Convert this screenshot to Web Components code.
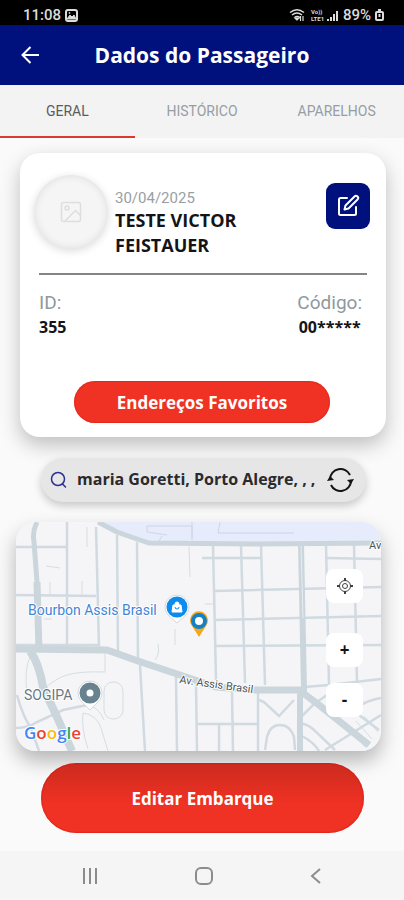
<!DOCTYPE html>
<html lang="pt-BR">
<head>
<meta charset="utf-8">
<meta name="viewport" content="width=device-width, initial-scale=1">
<title>Dados do Passageiro</title>
<style>
	body {
		margin: 0;
		background: #fafafa;
		font-family: "Open Sans", sans-serif;
		color: #141418;
	}
</style>
</head>
<body>
<passenger-page></passenger-page>

<script>
class BaseElement extends HTMLElement {
	constructor() {
		super();
		this.attachShadow({ mode: "open" });
		this.shadowRoot.innerHTML = `
			<style>
				* { box-sizing: border-box; }
				:host { display: block; box-sizing: border-box; }
				button { font: inherit; color: inherit; border: 0; padding: 0; background: none; cursor: pointer; }
				svg { display: block; }
			</style>
			${this.render()}
		`;
	}
}

class StatusBar extends BaseElement {
	render() {
		return `
			<style>
				:host {
					display: flex;
					justify-content: space-between;
					align-items: center;
					height: 25px;
					padding: 5px 20px 0 23px;
					background: #000;
					color: #dcdcdc;
					font: 500 15px/20px Roboto, sans-serif;
				}
				div { display: flex; align-items: center; gap: 4px; }
			</style>
			<div>
				<span>11:08</span>
				<svg width="13" height="13" viewBox="0 0 13 13" fill="none" stroke="#dcdcdc">
					<rect x="1" y="1" width="11" height="11" rx="2" stroke-width="2"/>
					<path d="M2 10l3-4 2 2 2-2 2 4z" fill="#dcdcdc"/>
					<circle cx="4.500" cy="4" r=".6"/>
				</svg>
			</div>
			<div>
				<svg width="50" height="15" viewBox="0 0 50 15" fill="none" stroke="#dcdcdc" stroke-width="1.500">
					<path d="M1 4.500Q8-1 15 4.500M3 7Q8 3 13 7M5.500 9.500Q8 7.500 11 9.500"/>
					<path d="M8 12l-2-2h4zM11.500 8v5M14 8v5" stroke-width="1.200" fill="#dcdcdc"/>
					<g fill="#dcdcdc" stroke="none" font-family="Roboto, sans-serif" font-size="6" font-weight="700">
						<text x="22" y="6">Vo))</text>
						<text x="22" y="13">LTE1</text>
					</g>
					<path d="M39 13v-2M42 13V9M45 13V6M48 13V3" stroke-width="2"/>
				</svg>
				<span>89%</span>
				<svg width="9" height="12" viewBox="0 0 9 12" fill="none" stroke="#dcdcdc" stroke-width="2">
					<rect x="1" y="3" width="7" height="8" rx="1"/><path d="M3 1h3M4.500 5v3"/>
				</svg>
			</div>
		`;
	}
}
customElements.define("status-bar", StatusBar);

class AppHeader extends BaseElement {
	render() {
		return `
			<style>
				:host {
					display: grid;
					grid-template-columns: 20px 1fr 20px;
					align-items: center;
					height: 60px;
					padding: 0 20px;
					background: #00107c;
					color: #fff;
				}
				h1 { margin: 0; text-align: center; font-size: 21px; line-height: 30px; font-weight: 700; }
			</style>
			<button aria-label="Voltar">
				<svg width="20" height="20" viewBox="0 0 20 20" fill="none" stroke="#fff" stroke-width="2"><path d="M19 10H3M10.500 2L2.500 10l8 8"/></svg>
			</button>
			<h1><slot></slot></h1>
		`;
	}
}
customElements.define("app-header", AppHeader);

class TabBar extends BaseElement {
	render() {
		return `
			<style>
				nav {
					display: grid;
					grid-template-columns: repeat(3, 1fr);
					background: #f3f3f3;
				}
				button {
					height: 53px;
					border-bottom: 2px solid transparent;
					font: 400 14px/20px Roboto, sans-serif;
					color: #969ea4;
				}
				button.active { color: #5c5c60; border-color: #dc3a30; }
			</style>
			<nav role="tablist">
				<button role="tab" aria-selected="true" class="active">GERAL</button>
				<button role="tab" aria-selected="false">HISTÓRICO</button>
				<button role="tab" aria-selected="false">APARELHOS</button>
			</nav>
		`;
	}
}
customElements.define("tab-bar", TabBar);

class PassengerCard extends BaseElement {
	render() {
		return `
			<style>
				:host {
					padding: 20px 16px 14px 14px;
					border-radius: 20px;
					background: #fff;
					box-shadow: 0 8px 20px rgba(0, 0, 0, .24);
				}
				.top { display: flex; gap: 7px; height: 100px; }
				.avatar {
					display: grid;
					place-items: center;
					width: 74px;
					height: 74px;
					margin-top: 2px;
					border-radius: 50%;
					background: #f5f5f5;
					box-shadow: 0 2px 8px rgba(0, 0, 0, .14), inset 0 0 9px rgba(0, 0, 0, .1);
				}
				.who { flex: 1; padding-top: 15px; }
				time { display: block; font: 400 15px/20px Roboto, sans-serif; color: #989fa3; }
				h2 { margin: 0; max-width: 150px; font-size: 18px; line-height: 25px; font-weight: 700; }
				.edit {
					display: grid;
					place-items: center;
					width: 44px;
					height: 46px;
					margin-top: 10px;
					border-radius: 9px;
					background: #00107c;
				}
				hr { height: 2px; margin: 0 3px 0 5px; border: 0; background: #858585; }
				dl { display: flex; justify-content: space-between; margin: 16px 8px 42px 5px; }
				dl div:last-child { text-align: center; }
				dt { font: 400 19px/24px Roboto, sans-serif; color: #8f999e; }
				dd { margin: 0; font-size: 16px; line-height: 24px; font-weight: 700; }
				.favorites {
					display: block;
					width: 256px;
					max-width: 100%;
					height: 42px;
					margin: 0 auto;
					border-radius: 21px;
					background: #f03224;
					box-shadow: inset 0 0 2px #d00c08;
					color: #fff;
					font-size: 17px;
					font-weight: 700;
				}
			</style>
			<div class="top">
				<div class="avatar">
					<svg width="22" height="22" viewBox="0 0 22 22" fill="none" stroke="#dedede" stroke-width="1.500" stroke-linejoin="round">
						<rect x="1.500" y="1.500" width="19" height="19" rx="2"/><circle cx="7" cy="7" r="2"/><path d="M5 20L15.500 9.500l5 5"/>
					</svg>
				</div>
				<div class="who">
					<time datetime="2025-04-30">30/04/2025</time>
					<h2>TESTE VICTOR FEISTAUER</h2>
				</div>
				<button class="edit" aria-label="Editar">
					<svg width="24" height="24" viewBox="0 0 24 24" fill="none" stroke="#fff" stroke-width="2" stroke-linecap="round" stroke-linejoin="round">
						<path d="M11 4H4.500A1.500 1.500 0 0 0 3 5.500v14A1.500 1.500 0 0 0 4.500 21h14a1.500 1.500 0 0 0 1.500-1.500V13"/>
						<path d="M18.500 2.500a2.100 2.100 0 0 1 3 3L12.500 14.500l-4 1 1-4z"/>
					</svg>
				</button>
			</div>
			<hr>
			<dl>
				<div><dt>ID:</dt><dd>355</dd></div>
				<div><dt>Código:</dt><dd>00*****</dd></div>
			</dl>
			<button class="favorites">Endereços Favoritos</button>
		`;
	}
}
customElements.define("passenger-card", PassengerCard);

class AddressSearch extends BaseElement {
	render() {
		return `
			<style>
				:host {
					display: flex;
					align-items: center;
					gap: 10px;
					height: 44px;
					padding: 0 12px 0 9px;
					border-radius: 22px;
					background: #e6e6e6;
					box-shadow: 0 4px 9px rgba(0, 0, 0, .2);
				}
				input {
					flex: 1;
					min-width: 0;
					padding: 0 0 3px;
					border: 0;
					outline: 0;
					background: none;
					color: #2a2a2e;
					font: 700 16px/24px "Open Sans", sans-serif;
				}
			</style>
			<svg width="17" height="18" viewBox="0 0 17 18" fill="none" stroke="#2a2f98" stroke-width="1.500" stroke-linecap="round"><circle cx="8" cy="8" r="6.500"/><path d="M12.500 13l3 3"/></svg>
			<input type="text" aria-label="Endereço" value="maria Goretti, Porto Alegre, , ,">
			<button aria-label="Atualizar">
				<svg width="27" height="26" viewBox="0 0 27 26" fill="none" stroke="#141414" stroke-width="2">
					<path d="M3 12A10.500 10.500 0 0 1 23 8M24 14A10.500 10.500 0 0 1 4 18"/>
					<path d="M0 14l3-5 4 4zM27 12l-3 5-4-4z" fill="#141414" stroke="none"/>
				</svg>
			</button>
		`;
	}
}
customElements.define("address-search", AddressSearch);

class StreetMap extends BaseElement {
	render() {
		return `
			<style>
				:host {
					position: relative;
					border-radius: 20px;
					box-shadow: 0 10px 20px rgba(0, 0, 0, .28);
				}
				.map { width: 100%; height: 229px; border-radius: 20px; background: #f5f5f7; }
				.controls {
					position: absolute;
					top: 47px;
					right: 18px;
					display: grid;
					gap: 16px;
				}
				.controls button {
					display: grid;
					place-items: center;
					width: 37px;
					height: 34px;
					border-radius: 8px;
					background: #fff;
					font-size: 17px;
					line-height: 20px;
					font-weight: 700;
				}
				.controls .locate { margin-bottom: 14px; }
			</style>
			<svg class="map" viewBox="0 0 365 229" preserveAspectRatio="xMidYMid slice" role="img" aria-label="Mapa">
				<path d="M82 0H365V21H133L101 9z" fill="#e6ecfb"/>
				<g fill="none" stroke="#d4dde3" stroke-width="1">
					<path d="M131 4h45v14M131 4v6l20 3M176 0v16M204 0l-2 11h76M146 14l-5 8" stroke="#ccd6e6"/>
					<path d="M34 60v13M66 59v14M173 25l1 30M30 44l14 2M28 97h8M159 107v16M71 5v20M142 122q2 10-3 16M189 82h9"/>
					<path d="M27 168Q38 157 51 153T89 150V128M14 135q-6 12-3 38M67 191q-2 15 5 36M67 191q14 2 18 15l7 23"/>
					<rect x="88" y="160" width="19" height="37" rx="9"/>
					<path d="M71 183q12 2 17 15M333 205l16 20M340 199l16 18M348 194l14 16"/>
				</g>
				<g fill="none" stroke="#d0dae0" stroke-width="2.500">
					<path d="M51 0V125M80 5l3 121M101 13l1 118M121 20l1 118M0 25h51M0 73l80 1M0 123h84"/>
					<path d="M124 143l5 86M160 155l1 74M180 162l1 67M181 202h62M203 202v27M216 170l1 59M242 171v58"/>
					<path d="M1 173q6 22 14 33l8 23M0 206q12 0 21-6l26-12 24-5"/>
					<path d="M197 23l3 135M225 23l4 138M245 23l4 140M310 23l3 140M338 23l3 138"/>
					<path d="M186 36h59M310 36l55 1M199 69l166-4M199 98l166-4M199 124l166-1M288 165l25-2 52-6"/>
					<path d="M243 178l5 2 15 14 15-16M249 228l2-13q3-12 13-12t14 12l1 13M284 196l14-14 13-9M284 201q10 2 16 9l19 18M309 228l56-35M343 184q10-6 22-8M343 193l20 15M284 213q14 7 19 16"/>
				</g>
				<g fill="none" stroke="#cad6dc">
					<path d="M21 0q-5 10-3 20l3 40 2 67" stroke-width="5"/>
					<path d="M21 60l2 69" stroke-width="7"/>
					<path d="M82 0l19 10 20 7 12 4 107 1 125-1" stroke-width="5"/>
					<path d="M285 22l3 146-4 5v56" stroke-width="6"/>
					<path d="M285 24l2 72" stroke="#e8edf0" stroke-width="1"/>
					<path d="M0 127l91 1 31 11 42 14 36 12 38 3h45l20 15 50 40" stroke-width="7"/>
					<path d="M14 129q9 12 13 36l14 30 15 34" stroke-width="8"/>
				</g>

				<g font-family="Roboto, sans-serif" stroke="#fff" stroke-width="2" paint-order="stroke" stroke-linejoin="round">
					<text x="12" y="93" font-size="14" fill="#4385d6">Bourbon Assis Brasil</text>
					<text x="8" y="178" font-size="14" fill="#69787f">SOGIPA</text>
					<text x="353" y="27" font-size="11" fill="#4c5358">Av</text>
					<text x="163" y="161" font-size="11" fill="#4c5358" transform="rotate(8 163 161)">Av. Assis Brasil</text>
				</g>
				<text x="8" y="217" font-family="Open Sans, sans-serif" font-size="17" font-weight="600" stroke="#fff" stroke-width="2" paint-order="stroke"><tspan fill="#4285f4">G</tspan><tspan fill="#ea4335">o</tspan><tspan fill="#fbbc05">o</tspan><tspan fill="#4285f4">g</tspan><tspan fill="#34a853">l</tspan><tspan fill="#ea4335">e</tspan></text>

				<path d="M161 101l-9-8a12 12 0 1 1 18 0z" fill="#fff" stroke="#d5dade"/>
				<circle cx="161" cy="85" r="10.500" fill="#0e8ced"/>
				<path d="M157 83h8l1 7h-10zM159 83v-1a2 2 0 0 1 4 0v1" fill="#fff" stroke="#fff"/>
				<path d="M159 85a2 2 0 0 0 4 0" fill="none" stroke="#0e8ced"/>
				<path d="M183 115l-7-11a9 9 0 1 1 14 0z" fill="#f5a81c"/>
				<circle cx="183" cy="99" r="6" fill="#fff" stroke="#1581c2" stroke-width="4"/>
				<path d="M74 188l-9-9a12 12 0 1 1 18 0z" fill="#fff" stroke="#d5dade"/>
				<circle cx="74" cy="171" r="7" fill="#fff" stroke="#69828f" stroke-width="7"/>
			</svg>
			<div class="controls">
				<button class="locate" aria-label="Minha localização">
					<svg width="16" height="16" viewBox="0 0 16 16" fill="none" stroke="#404040"><circle cx="8" cy="8" r="5.500"/><circle cx="8" cy="8" r="2.500"/><path d="M8 0v3M8 13v3M0 8h3M13 8h3" stroke-width="2"/></svg>
				</button>
				<button>+</button>
				<button>-</button>
			</div>
		`;
	}
}
customElements.define("street-map", StreetMap);

class PrimaryButton extends BaseElement {
	render() {
		return `
			<style>
				button {
					width: 100%;
					height: 70px;
					border-radius: 35px;
					background: linear-gradient(#cc2a1e, #f03224 60%);
					box-shadow: inset 0 0 2px #c80806;
					color: #fff;
					font-size: 17px;
					font-weight: 700;
				}
			</style>
			<button><slot></slot></button>
		`;
	}
}
customElements.define("primary-button", PrimaryButton);

class SystemNav extends BaseElement {
	render() {
		return `
			<style>
				:host {
					display: flex;
					justify-content: space-between;
					align-items: center;
					height: 49px;
					padding: 0 79px;
					background: #f5f5f5;
				}
				svg { fill: none; stroke: #8c8c8c; stroke-width: 2; }
			</style>
			<button aria-label="Recentes"><svg width="22" height="18" viewBox="0 0 22 18"><path d="M5 1v16M11 1v16M17 1v16"/></svg></button>
			<button aria-label="Início"><svg width="18" height="18" viewBox="0 0 18 18"><rect x="1" y="1" width="16" height="16" rx="5"/></svg></button>
			<button aria-label="Voltar"><svg width="18" height="18" viewBox="0 0 18 18"><path d="M13 2L5 9l8 7"/></svg></button>
		`;
	}
}
customElements.define("system-nav", SystemNav);

class PassengerPage extends BaseElement {
	render() {
		return `
			<style>
				:host { display: flex; flex-direction: column; min-height: 100vh; }
				main { flex: 1; padding: 15px 0 17px; }
				passenger-card { margin: 0 18px 21px 20px; }
				address-search { margin: 0 38px 20px 41px; }
				street-map { margin: 0 23px 12px 16px; }
				primary-button { position: relative; margin: 0 40px 0 41px; }
			</style>
			<status-bar></status-bar>
			<app-header>Dados do Passageiro</app-header>
			<tab-bar></tab-bar>
			<main>
				<passenger-card></passenger-card>
				<address-search></address-search>
				<street-map></street-map>
				<primary-button>Editar Embarque</primary-button>
			</main>
			<system-nav></system-nav>
		`;
	}
}
customElements.define("passenger-page", PassengerPage);
</script>
</body>
</html>
